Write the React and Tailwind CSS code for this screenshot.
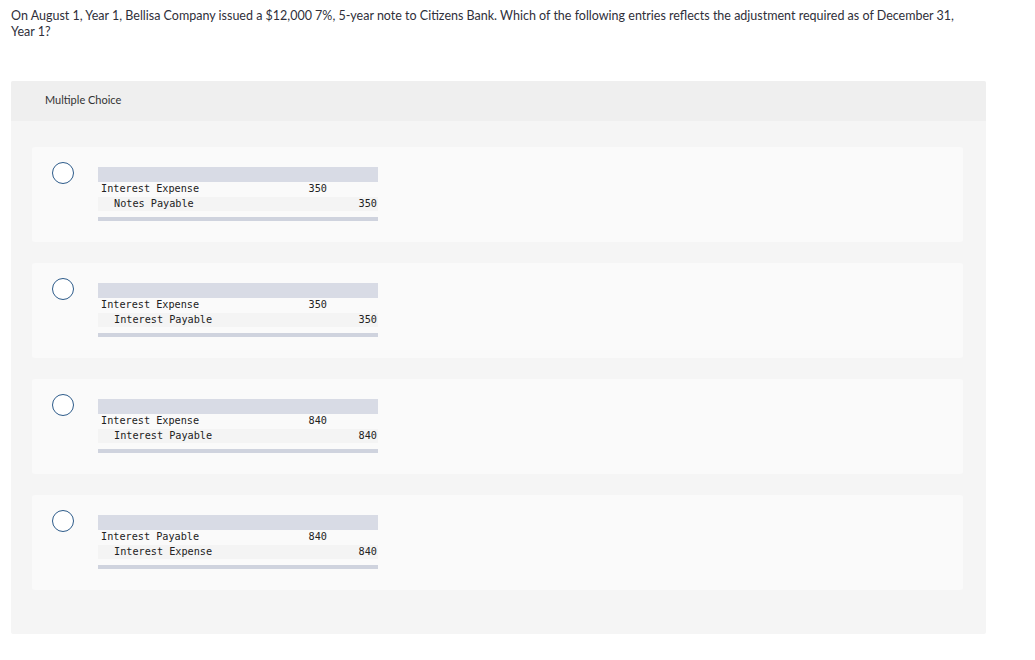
const choices = [
  { debit: 'Interest Expense', credit: 'Notes Payable', amount: '350' },
  { debit: 'Interest Expense', credit: 'Interest Payable', amount: '350' },
  { debit: 'Interest Expense', credit: 'Interest Payable', amount: '840' },
  { debit: 'Interest Payable', credit: 'Interest Expense', amount: '840' },
];

function JournalTable({ debit, credit, amount }) {
  return (
    <div className="w-[280px] mt-[20px] font-['DejaVu_Sans_Mono',monospace] text-[10.2px] leading-[12px] text-[#222]">
      <div className="h-[15px] bg-[#d8dbe5]" />
      <div className="flex h-[15px] items-center pl-[3px] pb-[1px]">
        <span className="w-[172px]">{debit}</span>
        <span className="w-[54px] text-right">{amount}</span>
      </div>
      <div className="flex h-[14px] items-center bg-[#f4f4f4] pl-[16px] pb-[1px]">
        <span className="flex-1">{credit}</span>
        <span className="pr-[1px] text-right">{amount}</span>
      </div>
      <div className="mt-[6px] h-[4px] bg-[#cfd3de]" />
    </div>
  );
}

export default function App() {
  return (
    <div className="min-h-[660px] bg-white font-['Lato',sans-serif]">
      <p className="w-[970px] px-[11px] pt-[8px] text-[12.5px] leading-[16px] text-[#2f2f3a]">
        On August 1, Year 1, Bellisa Company issued a $12,000 7%, 5-year note to Citizens Bank. Which of the following entries reflects the adjustment required as of December 31, Year 1?
      </p>

      <div className="ml-[11px] mt-[41px] w-[975px] rounded-[2px] bg-[#f5f5f5] pb-[44px]">
        <div className="flex h-[40px] items-center rounded-t-[2px] bg-[#efefef] pl-[34px] pb-[1px] text-[11px] text-[#333]">
          Multiple Choice
        </div>
        <div className="flex flex-col gap-[21px] pt-[26px] pl-[21px]">
          {choices.map((c, i) => (
            <div key={i} className="flex h-[95px] w-[931px] rounded-[3px] bg-[#fafafa]">
              <div className="ml-[20px] mt-[15px] h-[22px] w-[22px] rounded-full border-[1.5px] border-[#2d5b8a] bg-white" />
              <div className="ml-[24px]">
                <JournalTable {...c} />
              </div>
            </div>
          ))}
        </div>
      </div>
    </div>
  );
}
